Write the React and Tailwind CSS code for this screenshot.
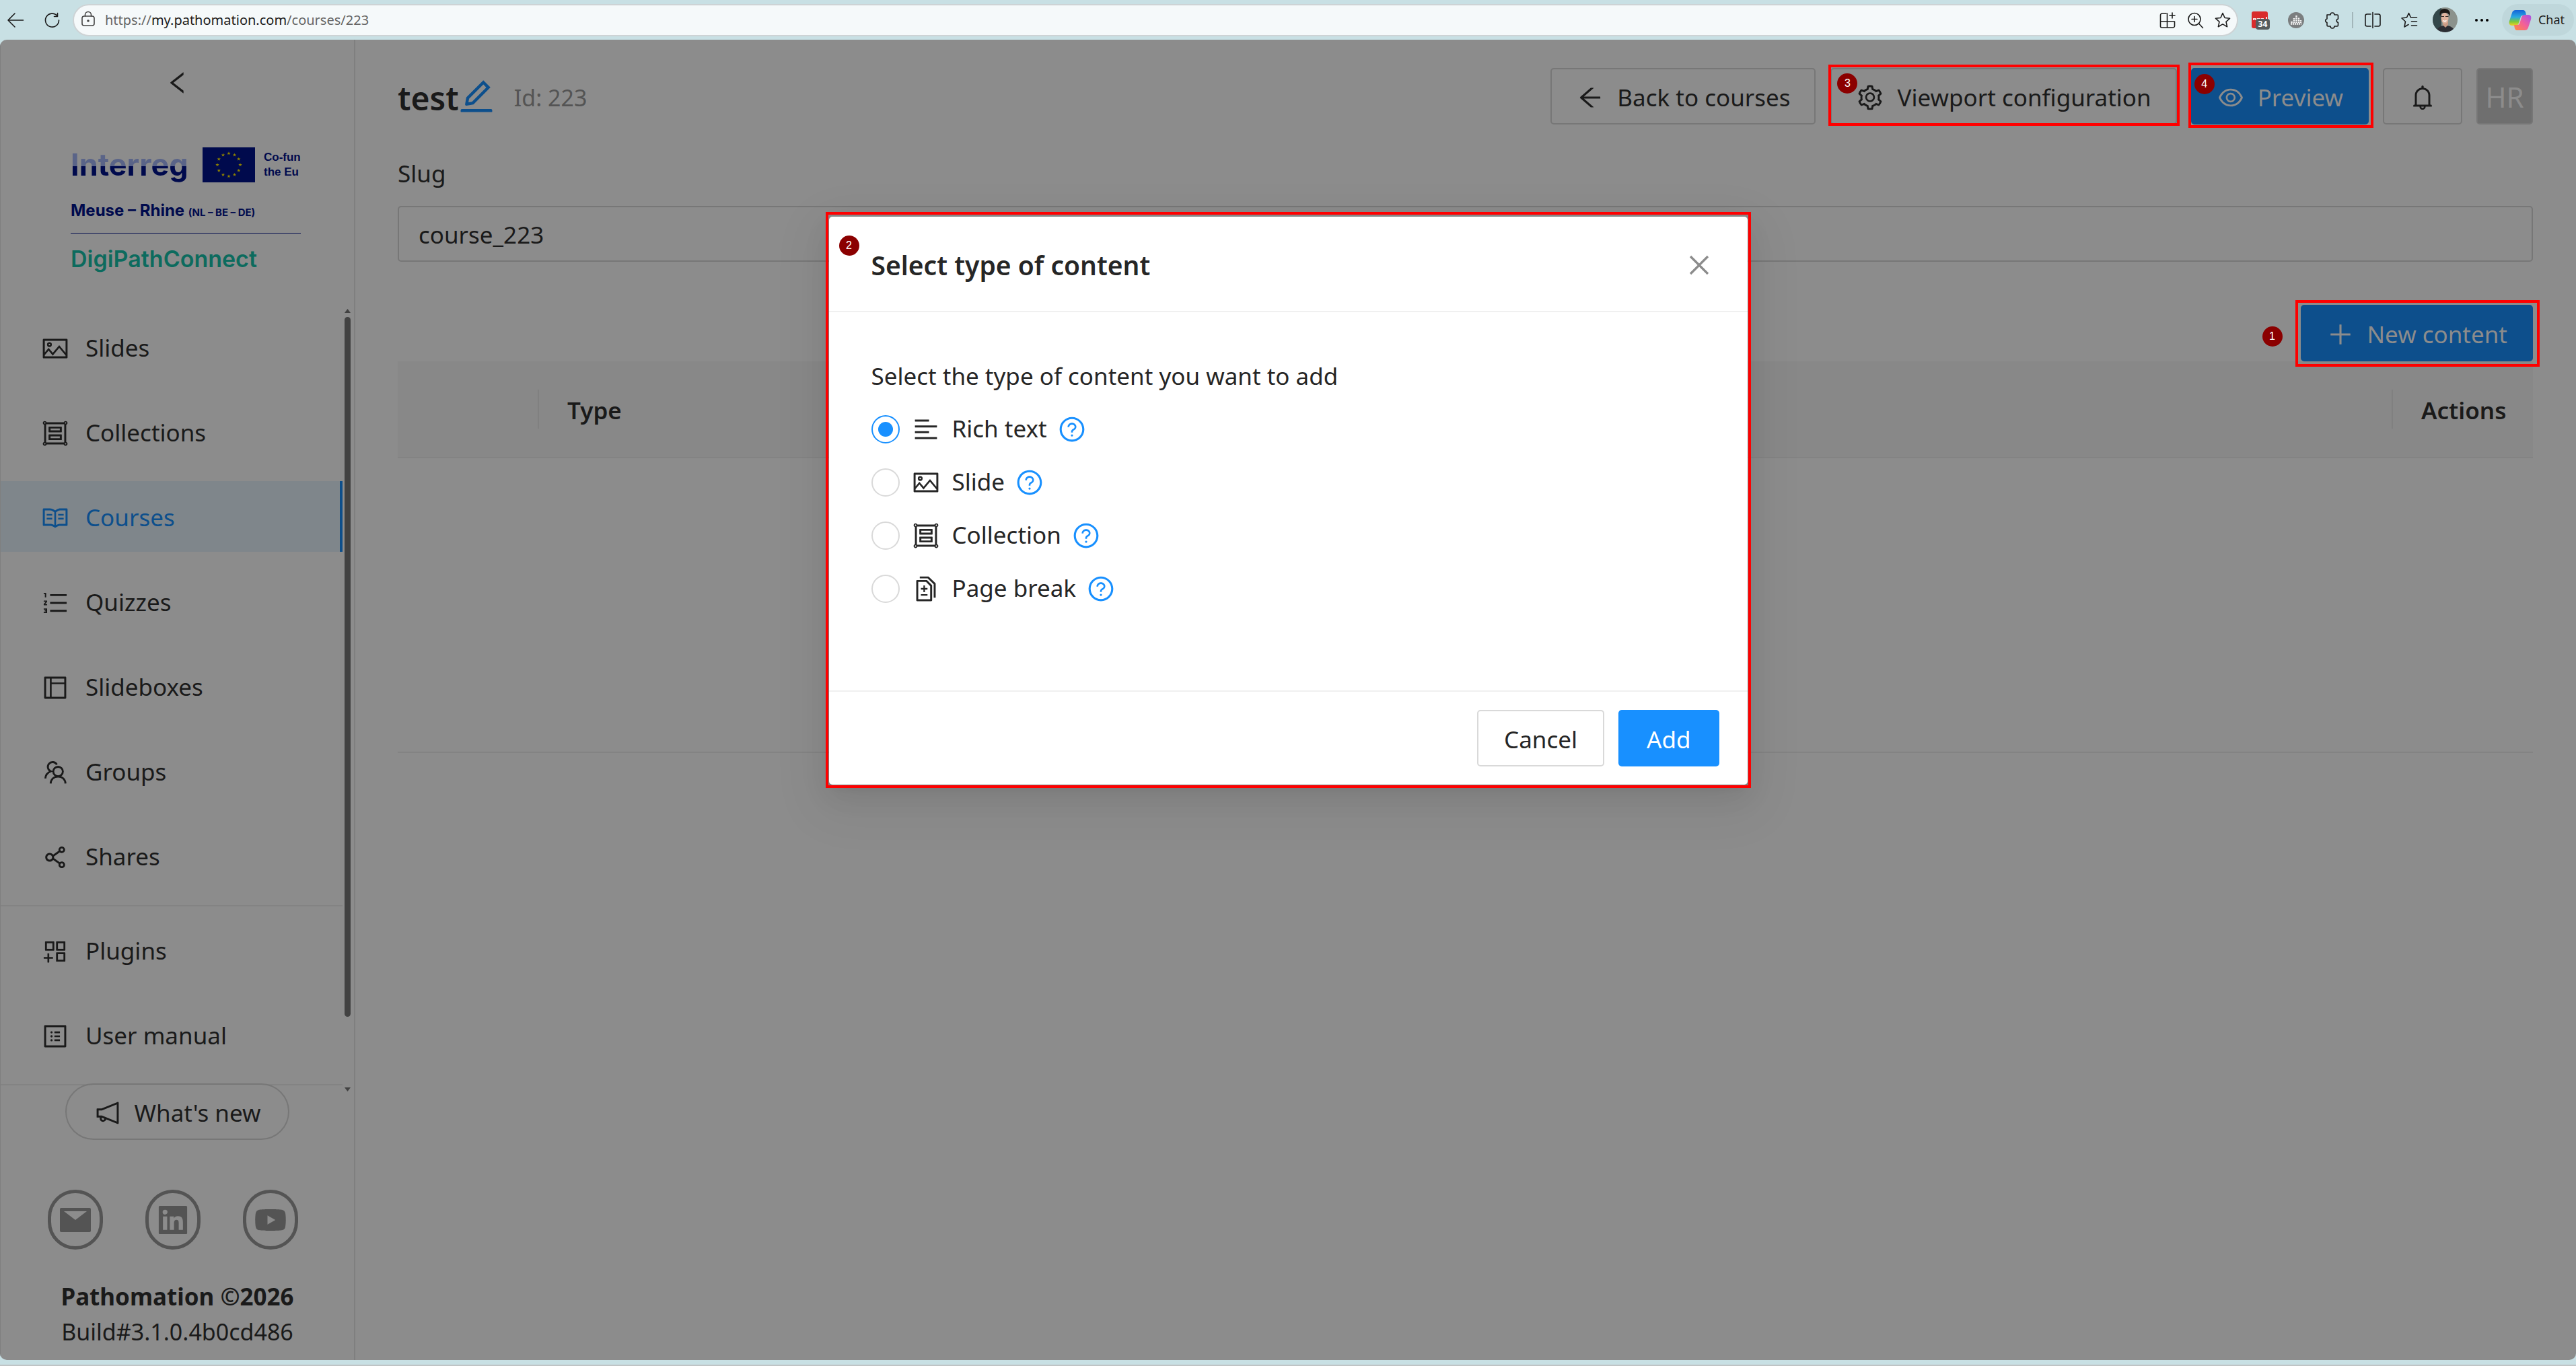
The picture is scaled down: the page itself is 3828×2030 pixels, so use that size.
import {
  AiOutlineAlignLeft, AiOutlineAppstoreAdd, AiOutlineArrowLeft, AiOutlineBell, AiOutlineClose, AiOutlineDiff,
  AiOutlineEdit, AiOutlineEye, AiOutlineGroup, AiOutlineLayout, AiOutlineLeft, AiOutlineNotification,
  AiOutlineOrderedList, AiOutlinePicture, AiOutlinePlus, AiOutlineProfile, AiOutlineQuestionCircle,
  AiOutlineRead, AiOutlineSetting, AiOutlineShareAlt, AiFillLinkedin, AiFillYoutube,
} from "react-icons/ai";

const GroupsIcon = ({ size }) => (
  <svg width={size} height={size} viewBox="171 125 118 118" fill="none" stroke="currentColor" strokeWidth="8">
    <circle cx="242" cy="180" r="20"/>
    <path d="M211 230C212 212 225 201 242 201S272 212 273 230"/>
    <path d="M237 151A20 20 0 1 0 212 179C198 184 190 194 189 209"/>
  </svg>
);

const NAV = [
  { icon: AiOutlinePicture,     label: "Slides" },
  { icon: AiOutlineGroup,       label: "Collections" },
  { icon: AiOutlineRead,        label: "Courses", active: true },
  { icon: AiOutlineOrderedList, label: "Quizzes" },
  { icon: AiOutlineLayout,      label: "Slideboxes" },
  { icon: GroupsIcon,           label: "Groups" },
  { icon: AiOutlineShareAlt,    label: "Shares" },
];
const NAV_EXTRA = [
  { icon: AiOutlineAppstoreAdd, label: "Plugins" },
  { icon: AiOutlineProfile,     label: "User manual" },
];
const CONTENT_TYPES = [
  { icon: AiOutlineAlignLeft, label: "Rich text",  id: "rich" },
  { icon: AiOutlinePicture,   label: "Slide",      id: "slide" },
  { icon: AiOutlineGroup,     label: "Collection", id: "collection" },
  { icon: AiOutlineDiff,      label: "Page break", id: "break" },
];

function Stroke({ children, className = "text-[#1c1c1c]" }) {
  return (
    <svg width="26" height="26" viewBox="0 0 26 26" fill="none" stroke="currentColor" strokeWidth="1.6"
      strokeLinecap="round" strokeLinejoin="round" className={className}>{children}</svg>
  );
}

function Cell({ children, label }) {
  return <button type="button" aria-label={label} className="w-[54px] h-full flex items-center justify-center">{children}</button>;
}

const STAR = "M13 2.5l3.1 7 7.4.8-5.5 5 1.6 7.4L13 18.9l-6.6 3.8L8 15.3l-5.5-5 7.4-.8z";

function BrowserBar() {
  return (
    <div className="h-[59px] shrink-0 flex items-center text-[20px] text-[#1c1c1c]">
      <button type="button" aria-label="Back" className="ml-[10px]">
        <Stroke><path d="M24.5 13H2M12 3L2 13l10 10"/></Stroke>
      </button>
      <button type="button" aria-label="Refresh" className="ml-[28px]">
        <Stroke><path d="M21 6.5A10 10 0 1 0 23.5 13M21.5 2.5v5h-5"/></Stroke>
      </button>
      <div className="ml-[18px] h-[48px] flex-1 flex items-center rounded-full border-2 border-[#cdd3d5] bg-[#f5f9fa] pl-[8px] pr-[8px]">
        <Stroke className="text-[#444] mb-[3px]"><rect x="4" y="9" width="18" height="14" rx="3"/><path d="M8.5 9V7a4.5 4.5 0 0 1 9 0v2"/><circle cx="13" cy="16" r="1"/></Stroke>
        <span className="ml-[12px] flex-1 text-[#666]">https://<span className="text-[#1c1c1c]">my.pathomation.com</span>/courses/223</span>
        <div className="flex gap-[15px] text-[#444]">
          <Stroke><path d="M11 3H5a2.5 2.5 0 0 0-2.5 2.5V22a2 2 0 0 0 2 2H21a2.5 2.5 0 0 0 2.5-2.5V15H2.5M12.5 3v21M20 2v8M16 6h8"/></Stroke>
          <Stroke><circle cx="12" cy="11.5" r="9"/><path d="M18.5 18l6 6.5M12 7.5v8M8 11.5h8"/></Stroke>
          <Stroke><path d={STAR}/></Stroke>
        </div>
      </div>
      <div className="h-full flex items-center ml-[5px]">
        <Cell label="PDF extension">
          <span className="relative w-[24px] h-[25px] rounded-[3px] bg-[#d92b2b]">
            <svg className="w-[24px] h-[25px]" viewBox="0 0 24 25" fill="none" stroke="#f3d8d8" strokeWidth="2"><path d="M3 13V11h3v2M9 13V11h3v2M15 13V11h2v2M22 8v4"/></svg>
            <span className="absolute left-[6px] top-[11px] w-[21px] h-[16px] rounded-[4px] bg-[#565b5c] text-white text-[12px] leading-[16px] font-bold">34</span>
          </span>
        </Cell>
        <Cell label="Statistics extension">
          <svg width="24" height="24" viewBox="0 0 24 24"><circle cx="12" cy="12" r="12" fill="#7b7e7f"/><path d="M4 17.5h16M5.5 16v-3M9 16V9M12.5 16V5M16 16V8.5M19 16v-4" stroke="#f2f2f2" strokeWidth="2.4" strokeDasharray="2.2 .8"/></svg>
        </Cell>
        <Cell label="Extensions">
          <Stroke><path d="M5 5h5a3 3 0 0 1 6 0h4a1.5 1.5 0 0 1 1.5 1.5V11a2.8 2.8 0 0 0 0 5.5V20.5a1.5 1.5 0 0 1-1.5 1.5H16a3 3 0 0 1-6 0H6.5A1.5 1.5 0 0 1 5 20.5v-4a2.8 2.8 0 0 1 0-5.5z"/></Stroke>
        </Cell>
        <span className="w-[2px] h-[24px] mx-[2px] bg-[#a3b6ba]"/>
        <Cell label="Split screen">
          <Stroke><path d="M10 4H4.5A2.5 2.5 0 0 0 2 6.5v13A2.5 2.5 0 0 0 4.5 22H10M16 4h5.5A2.5 2.5 0 0 1 24 6.5v13a2.5 2.5 0 0 1-2.5 2.5H16M13 1.5v23"/></Stroke>
        </Cell>
        <Cell label="Favorites">
          <Stroke><path d="M24.5 9H15.5L12.5 2.5 9.5 9l-7.5 1 5.5 5L6 23l6-3.5M16.5 15H24.5M16.5 21H24.5"/></Stroke>
        </Cell>
        <Cell label="Profile">
          <svg width="37" height="37" viewBox="0 0 37 37">
            <defs><clipPath id="face"><circle cx="18.5" cy="18.5" r="18.5"/></clipPath></defs>
            <g clipPath="url(#face)">
              <path fill="#8b928c" d="M0 0h37v37H0z"/><path fill="#33474a" d="M0 0h13v37H0z"/>
              <path fill="#2b2d33" d="M5 37c1-7 7-10 14-10s13 3 14 10z"/>
              <path fill="#c99a84" d="M15 20h8v6l-4 4-4-4z"/><ellipse cx="18" cy="16" rx="5.5" ry="8" fill="#e0b49f"/>
              <path fill="#1d1917" d="M11 13C9 4 14 1.5 18 2S28 5 25 13c-1-4-3-5-7-5s-6 1-7 5z"/>
              <path d="M12.5 13.5h4.5m2 0h4.5" stroke="#3a2d29" strokeWidth="1.2"/>
              <path d="M15.5 19.5q2.5 2 5 0" stroke="#fff" strokeWidth="1.5" fill="none"/>
            </g>
          </svg>
        </Cell>
        <Cell label="More">
          <svg width="22" height="6" viewBox="0 0 22 6"><circle cx="3" cy="3" r="2"/><circle cx="11" cy="3" r="2"/><circle cx="19" cy="3" r="2"/></svg>
        </Cell>
      </div>
      <button type="button" className="mx-[3px] h-[47px] flex items-center gap-[10px] rounded-full bg-[#bfd7db] pl-[10px] pr-[14px] text-[18px]">
        <svg width="34" height="32" viewBox="0 0 34 32">
          <defs>
            <linearGradient id="cpA" x1="0" y1="0" x2="0" y2="1"><stop offset="0" stopColor="#1463d8"/><stop offset=".45" stopColor="#28a9e0"/><stop offset=".75" stopColor="#7cc83a"/><stop offset="1" stopColor="#f4d024"/></linearGradient>
            <linearGradient id="cpB" x1="1" y1="0" x2="0" y2="1"><stop offset="0" stopColor="#a651e8"/><stop offset=".5" stopColor="#f2609a"/><stop offset="1" stopColor="#ff8a3c"/></linearGradient>
          </defs>
          <path fill="url(#cpA)" d="M10 1h11c3 0 4 2 4.5 5l.5 3h-5c-2 0-3 1-3.5 3L15 20c-1 3-3 4-5 4H5c-4 0-5-3-4-7L5 5c1-3 3-4 5-4z"/>
          <path fill="url(#cpB)" d="M24 31H13c-3 0-4-2-4.5-5L8 23h5c2 0 3-1 3.5-3L19 12c1-3 3-4 5-4h5c4 0 5 3 4 7l-4 12c-1 3-3 4-5 4z"/>
        </svg>
        Chat
      </button>
    </div>
  );
}

// red outline used for the walkthrough steps
const Frame = ({ className }) => <span className={`absolute pointer-events-none border-4 border-[#f00] ${className}`}/>;

const Step = ({ n, className }) => (
  <span className={`absolute size-[30px] rounded-full bg-[#8b0000] text-white text-[16px] leading-[30px] text-center font-["Liberation_Sans",sans-serif] ${className}`}>{n}</span>
);

function Logo() {
  return (
    <div className="w-[342px] font-['Inter',sans-serif] font-bold text-[#000a4d] whitespace-nowrap">
      <div className="flex items-center h-[54px]">
        <span className="w-[196px] shrink-0 text-[45px] leading-[54px] bg-linear-to-b from-[#5a6488] from-54% to-[#000a4d] to-54% bg-clip-text text-transparent">Interreg</span>
        <svg className="shrink-0" width="78" height="52" viewBox="0 0 78 52">
          <path fill="#000a4d" d="M0 0h78v52H0z"/>
          {[...Array(12)].map((_, i) => (
            <path key={i} fill="#8c8000" transform={`translate(${39 + 17 * Math.sin(i * Math.PI / 6)} ${26 - 17 * Math.cos(i * Math.PI / 6)})`}
              d="M0-2.8L.7-.9 2.7-.9 1.1.4 1.7 2.3 0 1.1-1.7 2.3-1.1.4-2.7-.9-.7-.9z"/>
          ))}
        </svg>
        <span className="ml-[13px] text-[17px] leading-[22px] font-['Liberation_Sans',sans-serif]">Co-fun<br/>the Eu</span>
      </div>
      <div className="mt-[25px] h-[32px] leading-[32px] text-[24px]">Meuse – Rhine <span className="text-[15px]">(NL – BE – DE)</span></div>
      <div className="mt-[17px] h-px bg-[#000a4d]"/>
      <div className="mt-[14px] h-[48px] leading-[48px] text-[34px] font-semibold text-[#0c6b5e]">DigiPathConnect</div>
    </div>
  );
}

function NavItem({ icon: Icon, label, active }) {
  return (
    <a href="#" className={`h-[105px] shrink-0 flex items-center gap-[24px] pl-[60px] pt-[4px] ${active ? "bg-[#7f868b] text-[#0d4f8c] border-r-4 border-[#0d4f8c]" : ""}`}>
      <Icon size={42}/>{label}
    </a>
  );
}

function Sidebar() {
  return (
    <aside className="w-[528px] shrink-0 flex flex-col border-l border-r-2 border-[#7f7f7f]">
      <div className="h-[393px] shrink-0 flex flex-col items-center">
        <button type="button" aria-label="Collapse menu" className="mt-[43px] mb-[74px]"><AiOutlineLeft size={42}/></button>
        <div className="self-start ml-[104px]"><Logo/></div>
      </div>
      <nav className="flex-1 min-h-0 flex">
        <div className="flex-1 flex flex-col gap-[21px] pt-[11px] overflow-hidden">
          {NAV.map(n => <NavItem key={n.label} {...n}/>)}
          <div className="border-t-2 border-[#838383] pt-[12px]">
            {NAV_EXTRA.map(n => <div key={n.label} className="mb-[21px]"><NavItem {...n}/></div>)}
            <div className="border-t-2 border-[#838383]"/>
          </div>
        </div>
        <div className="w-[17px] pl-[3px] pt-[7px] pb-[6px] flex flex-col text-[#424242]">
          <svg width="9" height="6" viewBox="0 0 9 6" fill="currentColor"><path d="M4.5 0L9 6H0z"/></svg>
          <div className="mt-[6px] w-[9px] h-[1040px] rounded-full bg-[#424242]"/>
          <svg className="mt-auto" width="9" height="6" viewBox="0 0 9 6" fill="currentColor"><path d="M4.5 6L9 0H0z"/></svg>
        </div>
      </nav>
      <div className="shrink-0 -mt-[18px] pb-[15px] flex flex-col items-center">
        <button type="button" className="h-[84px] w-[333px] flex items-center justify-center gap-[18px] rounded-full border-2 border-[#777] bg-[#8c8c8c] pt-[4px]">
          <AiOutlineNotification size={42}/>What's new
        </button>
        <div className="mt-[74px] mr-[14px] flex gap-[63px] text-[#545454]">
          <a href="#" aria-label="E-mail" className="w-[82px] h-[89px] rounded-full border-5 border-[#545454] flex items-center justify-center">
            <svg width="46" height="36" viewBox="0 0 46 36" fill="currentColor"><path fillRule="evenodd" d="M2 0h42a2 2 0 0 1 2 2v32a2 2 0 0 1-2 2H2a2 2 0 0 1-2-2V2a2 2 0 0 1 2-2zM6 5l17 13L40 5z"/></svg>
          </a>
          <a href="#" aria-label="LinkedIn" className="w-[82px] h-[89px] rounded-full border-5 border-[#545454] flex items-center justify-center"><AiFillLinkedin size={54}/></a>
          <a href="#" aria-label="YouTube" className="w-[82px] h-[89px] rounded-full border-5 border-[#545454] flex items-center justify-center"><AiFillYoutube size={52}/></a>
        </div>
        <strong className="mt-[43px] text-[35px] leading-[53px]">Pathomation ©2026</strong>
        <span className="text-[34px] leading-[53px]">Build#3.1.0.4b0cd486</span>
      </div>
    </aside>
  );
}

const BTN = "h-[84px] flex items-center gap-[19px] rounded-[5px] border-2 px-[36px] pt-[4px]";

function Header() {
  return (
    <header className="flex items-center h-[84px]">
      <h1 className="text-[48px] font-semibold leading-[60px] pt-[6px]">test</h1>
      <button type="button" aria-label="Rename" className="-ml-1 text-[#0d4f8c]"><AiOutlineEdit size={60}/></button>
      <span className="ml-[26px] pt-[4px] text-[34px] text-[#545454]">Id: 223</span>
      <div className="ml-auto flex">
        <button type="button" className={`${BTN} border-[#777] mr-[22px]`}><AiOutlineArrowLeft size={42}/>Back to courses</button>
        <button type="button" className={`${BTN} relative border-[#777] mr-[21px]`}>
          <AiOutlineSetting size={42}/>Viewport configuration
          <Frame className="-left-[5px] -right-[6px] -top-[7px] -bottom-[4px]"/><Step n="3" className="left-[8px] top-[6px]"/>
        </button>
        <button type="button" className={`${BTN} relative border-[#0d4f8c] bg-[#0d4f8c] text-[#8c8c8c] mr-[21px]`}>
          <AiOutlineEye size={42}/>Preview
          <Frame className="-left-[6px] -right-[9px] -top-[10px] -bottom-[7px]"/><Step n="4" className="left-[3px] top-[7px]"/>
        </button>
        <button type="button" aria-label="Notifications" className={`${BTN} border-[#777] mr-[21px]`}><AiOutlineBell size={42}/></button>
        <button type="button" className="size-[84px] rounded-[5px] border-2 border-[#777] bg-[#6f6f6f] text-[#8c8c8c] text-[42px]">HR</button>
      </div>
    </header>
  );
}

function Course() {
  return (
    <main className="flex-1 pl-[63px] pr-[64px] pt-[42px]">
      <Header/>
      <label htmlFor="slug" className="block mt-[44px] leading-[58px]">Slug</label>
      <input id="slug" defaultValue="course_223" className="mt-[19px] block w-full h-[83px] rounded-[5px] border-2 border-[#777] px-[29px] pt-[2px]"/>
      <div className="mt-[64px] flex justify-end">
        <button type="button" className={`${BTN} relative border-[#0d4f8c] bg-[#0d4f8c] text-[#8c8c8c]`}>
          <AiOutlinePlus size={42}/>New content
          <Frame className="-left-[10px] -right-[12px] -top-[9px] -bottom-[10px]"/><Step n="1" className="-left-[59px] top-[30px]"/>
        </button>
      </div>
      <table className="w-full text-left border-collapse">
        <thead>
          <tr className="h-[143px] bg-[#888] border-b-2 border-[#838383]">
            <th className="w-[210px] p-0"><div className="h-[58px] border-r-2 border-[#808080]"/></th>
            <th className="p-0 font-semibold"><div className="h-[58px] leading-[62px] pl-[42px] border-r-2 border-[#808080]">Type</div></th>
            <th className="w-[208px] p-0 pl-[42px] font-semibold"><div className="h-[58px] leading-[62px]">Actions</div></th>
          </tr>
        </thead>
        <tbody><tr className="h-[438px] border-b-2 border-[#838383]"><td colSpan={3}/></tr></tbody>
      </table>
    </main>
  );
}

function ContentDialog() {
  return (
    <div className="absolute inset-x-0 top-[263px] flex justify-center">
      <form role="dialog" aria-labelledby="dlg-title" className="relative w-[1365px] rounded-[5px] bg-white text-[#262626] shadow-[0_8px_16px_-10px_rgba(0,0,0,0.12),0_16px_42px_rgba(0,0,0,0.08),0_24px_74px_21px_rgba(0,0,0,0.05)]">
        <div className="h-[142px] flex items-center justify-between px-[63px] pt-[4px] border-b-2 border-[#f0f0f0]">
          <h2 id="dlg-title" className="text-[39px] font-semibold">Select type of content</h2>
          <button type="button" aria-label="Close" className="text-[#8c8c8c] -mr-[12px]"><AiOutlineClose size={42}/></button>
        </div>
        <fieldset aria-labelledby="dlg-hint" className="h-[564px] px-[63px] pt-[63px] border-b-2 border-[#f0f0f0]">
          <p id="dlg-hint" className="h-[71px] leading-[64px]">Select the type of content you want to add</p>
          {CONTENT_TYPES.map(({ icon: Icon, label, id }) => (
            <div key={id} className="h-[79px] flex items-center">
              <input type="radio" name="type" id={id} defaultChecked={id === "rich"}
                className="size-[42px] appearance-none rounded-full border-2 border-[#d9d9d9] grid place-content-center checked:border-[#1890ff] before:content-[''] before:size-[22px] before:rounded-full checked:before:bg-[#1890ff]"/>
              <label htmlFor={id} className="ml-[18px] flex items-center gap-[18px]"><Icon size={42}/>{label}</label>
              <button type="button" aria-label={`About ${label}`} className="ml-[16px] text-[#1890ff]"><AiOutlineQuestionCircle size={42}/></button>
            </div>
          ))}
        </fieldset>
        <div className="h-[138px] flex items-center justify-end gap-[21px] px-[42px]">
          <button type="button" className="h-[84px] px-[38px] pt-[4px] rounded-[5px] border-2 border-[#d9d9d9]">Cancel</button>
          <button type="submit" className="h-[84px] px-[42px] pt-[4px] rounded-[5px] bg-[#1890ff] text-white">Add</button>
        </div>
        <Frame className="-inset-x-[5px] -top-[7px] -bottom-[5px]"/>
        <Step n="2" className="left-[15px] top-[28px]"/>
      </form>
    </div>
  );
}

export default function App() {
  return (
    <div className="min-h-screen flex flex-col bg-[#c8e0e4] border-b-2 border-[#bfc4c5] font-['Noto_Sans',sans-serif] text-[35px] text-[#1a1a1a]">
      <BrowserBar/>
      <div className="relative flex-1 flex overflow-hidden rounded-[10px] bg-[#8c8c8c] mb-[7px]">
        <Sidebar/>
        <Course/>
        <ContentDialog/>
      </div>
    </div>
  );
}
